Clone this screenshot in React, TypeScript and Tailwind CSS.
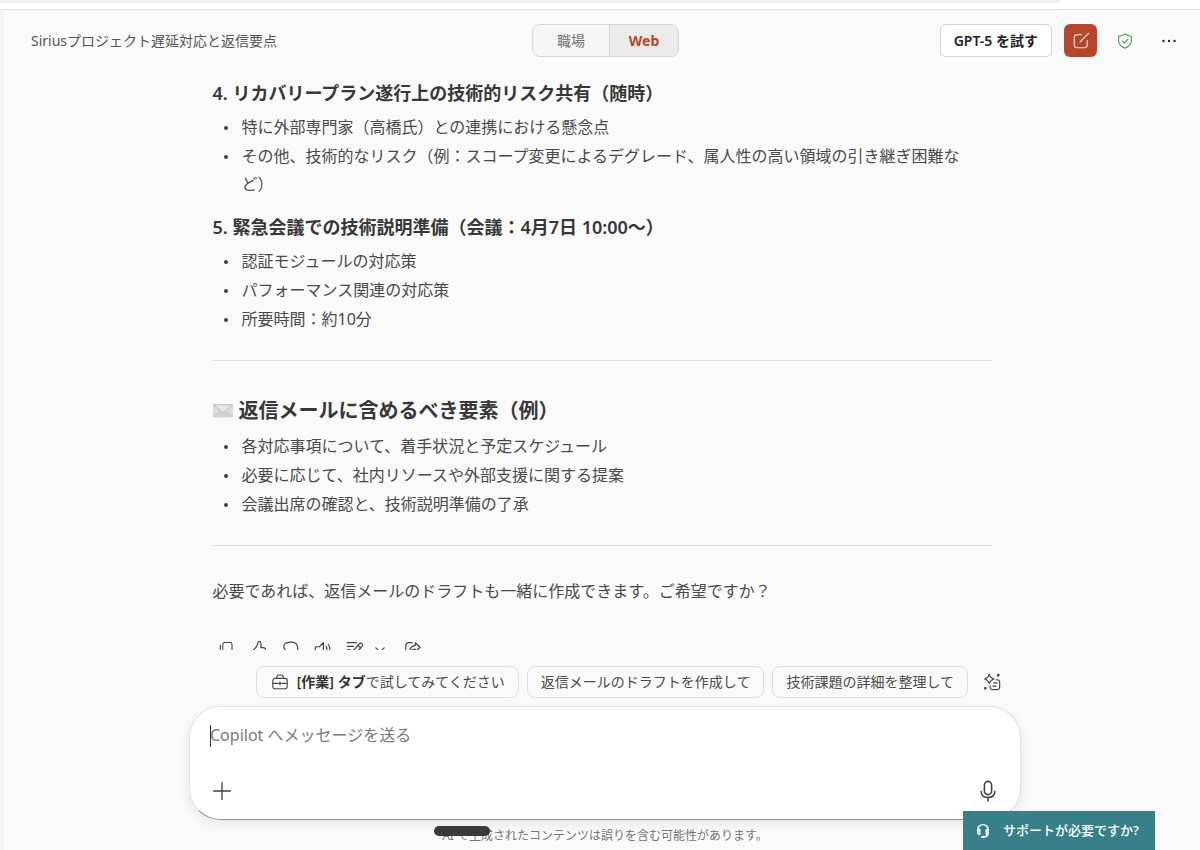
import { useState } from 'react';
import type { ReactNode } from 'react';

const sections = [
  {
    title: '4. リカバリープラン遂行上の技術的リスク共有（随時）',
    items: [
      '特に外部専門家（高橋氏）との連携における懸念点',
      'その他、技術的なリスク（例：スコープ変更によるデグレード、属人性の高い領域の引き継ぎ困難など）'
    ]
  },
  {
    title: '5. 緊急会議での技術説明準備（会議：4月7日 10:00～）',
    items: [
      '認証モジュールの対応策',
      'パフォーマンス関連の対応策',
      '所要時間：約10分'
    ]
  }
];

const replyItems = [
  '各対応事項について、着手状況と予定スケジュール',
  '必要に応じて、社内リソースや外部支援に関する提案',
  '会議出席の確認と、技術説明準備の了承'
];

function Icon({ children, className }: { children: ReactNode; className: string }) {
  return (
    <svg
      viewBox="0 0 20 20"
      fill="none"
      stroke="currentColor"
      strokeWidth="1.3"
      strokeLinecap="round"
      strokeLinejoin="round"
      className={className}
      aria-hidden="true"
    >
      {children}
    </svg>
  );
}

function BulletList({ items }: { items: string[] }) {
  return (
    <ul className="flex flex-col gap-px pr-4 pl-[11px]">
      {items.map((item) => (
        <li key={item} className="flex gap-[14px] text-base leading-7">
          <span className="mt-[13px] size-1 shrink-0 rounded-full bg-[#424242]" />
          <span>{item}</span>
        </li>
      ))}
    </ul>
  );
}

function Envelope() {
  return (
    <svg viewBox="0 0 20 14" className="h-[14px] w-5" aria-hidden="true">
      <rect x="0" y="0.5" width="20" height="13" rx="0.8" fill="#dcdcdc" />
      <path d="M0.5 13 L7.5 6.5 L10 8.5 L12.5 6.5 L19.5 13" fill="#d2d2d2" stroke="#bdbdbd" strokeWidth="0.6" />
      <path d="M0.5 0.8 L8.8 8 Q10 9 11.2 8 L19.5 0.8 Z" fill="#e6e6e6" stroke="#adadad" strokeWidth="0.7" />
    </svg>
  );
}

function MessageActions() {
  return (
    <div className="mt-[35px] flex items-center pl-[5px] text-[#424242]">
      <button type="button" aria-label="コピー">
        <Icon className="size-4">
          <rect x="6" y="2" width="11.5" height="13" rx="2" />
          <path d="M3 5v10a3 3 0 0 0 3 3h8" />
        </Icon>
      </button>
      <button type="button" aria-label="良い回答" className="ml-4">
        <Icon className="size-[18px]">
          <path d="M10 1.500c-.8 0-1 .8-1.300 2C8 6.500 7 8.500 5 10c-2 1.500-2 3-1 5 1 2 3 3 5.500 3h3c2.500 0 3.500-1 4-3l.800-3.500c.300-1.800-.800-3-2.500-3h-2.800c.300-2 .5-3.700.1-5C11.700 2 11 1.500 10 1.500Z" />
        </Icon>
      </button>
      <button type="button" aria-label="良くない回答" className="ml-[14px]">
        <Icon className="size-[18px]">
          <path d="M10 18c-1 0-1.200-.8-1.500-2C8 13.500 6 13 3.500 11 1.500 9 1.500 6 3.500 4 6 2.300 12 1.500 15 3.500c2 1.500 2.500 5 2.500 7 0 1.500-1 2-2.500 2h-3c.6 2 .3 5.500-2 5.500Z" />
        </Icon>
      </button>
      <button type="button" aria-label="読み上げる" className="ml-[14px]">
        <Icon className="size-[18px]">
          <path d="M10.500 3v14L6 13H2.500a1 1 0 0 1-1-1V8.500a1 1 0 0 1 1-1H6L10.500 3Z" />
          <path d="M13.500 7c1 2 1 4 0 6M16 5c2 3.200 2 6.800 0 10" />
        </Icon>
      </button>
      <button type="button" aria-label="編集" className="ml-[14px]">
        <Icon className="size-[18px]">
          <path d="M1.500 3h10M1.500 7h7M1.500 11H5" />
          <path d="m6 17 1-4 8-9c1.700-1.700 4.500 .8 3 2.800l-8 9L6 17ZM13 5.500 16.500 9" />
        </Icon>
      </button>
      <button type="button" aria-label="編集オプション" className="ml-[10px]">
        <Icon className="size-3">
          <path d="m3 8 7 7 7-7" strokeWidth="1.800" />
        </Icon>
      </button>
      <button type="button" aria-label="共有" className="ml-[18px]">
        <Icon className="size-[18px]">
          <path d="M9 3H5a3 3 0 0 0-3 3v8a3 3 0 0 0 3 3h8a3 3 0 0 0 3-3v-1" />
          <path d="M12.500 3 18 8l-5.500 5v-3C9.500 10 8 11 6 13c.5-4 3-6.500 6.500-7V3Z" />
        </Icon>
      </button>
    </div>
  );
}

function Header() {
  const [mode, setMode] = useState('web');

  return (
    <header className="grid h-[61px] shrink-0 grid-cols-[1fr_auto_1fr] items-center pr-5 pl-[27px] text-sm">
      <h1 className="truncate text-[#555555]">Siriusプロジェクト遅延対応と返信要点</h1>

      <div className="flex h-[33px] overflow-hidden rounded-lg border border-[#d4d4d4]">
        <button
          type="button"
          onClick={() => setMode('work')}
          className={`w-[76px] ${mode === 'work' ? 'bg-[#ebebeb] font-bold text-[#b7472a]' : 'bg-[#f6f6f6] text-[#707070]'}`}
        >
          職場
        </button>
        <button
          type="button"
          onClick={() => setMode('web')}
          className={`w-[69px] border-l border-[#d4d4d4] ${mode === 'web' ? 'bg-[#ebebeb] font-bold text-[#b7472a]' : 'bg-[#f6f6f6] text-[#707070]'}`}
        >
          Web
        </button>
      </div>

      <div className="flex items-center justify-end">
        <button
          type="button"
          className="h-[33px] rounded-md border border-[#d4d4d4] bg-white px-[13px] font-semibold whitespace-nowrap text-[#242424]"
        >
          GPT-5 を試す
        </button>
        <button
          type="button"
          aria-label="新しいチャット"
          className="ml-3 flex size-[33px] items-center justify-center rounded-md bg-[#b7472a] text-[#ffe3da]"
        >
          <Icon className="size-[18px]">
            <path d="M10.500 3H6A3.500 3.500 0 0 0 2.500 6.500v7.500A3.500 3.500 0 0 0 6 17.500h7.500A3.500 3.500 0 0 0 17 14V9.500" />
            <path d="M9 11 18.500 1.500" />
          </Icon>
        </button>
        <button type="button" aria-label="保護されています" className="ml-5 text-[#4b9447]">
          <Icon className="size-4">
            <path d="M10 1.200c2.200 1.800 4.800 2.700 8 2.900v5.400c0 4.600-2.700 7.600-8 9.500-5.300-1.900-8-4.900-8-9.500V4.100c3.200-.2 5.800-1.100 8-2.900Z" />
            <path d="m6.500 10.300 2.400 2.400 4.800-4.800" />
          </Icon>
        </button>
        <button type="button" aria-label="その他" className="ml-[25px] text-[#242424]">
          <svg viewBox="0 0 22 22" fill="currentColor" className="size-[22px]" aria-hidden="true">
            <circle cx="5.500" cy="11" r="1.200" />
            <circle cx="11" cy="11" r="1.200" />
            <circle cx="16.500" cy="11" r="1.200" />
          </svg>
        </button>
      </div>
    </header>
  );
}

function Suggestions() {
  const chip = 'flex h-8 items-center rounded-lg border border-[#e0e0e0] bg-[#fafafa] px-[13px] whitespace-nowrap';

  return (
    <div className="flex items-center justify-end gap-2 pr-5 text-sm text-[#4a4a4a]">
      <button type="button" className={chip}>
        <Icon className="mr-2 ml-px size-[18px]">
          <path d="M4.500 6h11A2.500 2.500 0 0 1 18 8.500V15a2.500 2.500 0 0 1-2.500 2.500h-11A2.500 2.500 0 0 1 2 15V8.500A2.500 2.500 0 0 1 4.500 6Z" />
          <path d="M6.500 6V4A1.800 1.800 0 0 1 8.300 2.200h3.400A1.800 1.800 0 0 1 13.500 4v2M2 11.500h16M10 10v3" />
        </Icon>
        <span>
          <b className="font-semibold text-[#333333]">[作業] タブ</b>で試してみてください
        </span>
      </button>
      <button type="button" className={chip}>返信メールのドラフトを作成して</button>
      <button type="button" className={chip}>技術課題の詳細を整理して</button>
      <button type="button" aria-label="その他のプロンプト" className="ml-[7px]">
        <Icon className="size-[18px]">
          <path d="M7 1.500c.7 2.600 2.300 4.300 5.200 5.200C9.300 7.600 7.700 9.300 7 11.900 6.300 9.300 4.700 7.600 1.800 6.700 4.700 5.800 6.300 4.100 7 1.500Z" />
          <path d="M14.500 7.500h1.200A2.800 2.800 0 0 1 18.500 10.300v5.400a2.800 2.800 0 0 1-2.800 2.800h-4.900A2.800 2.800 0 0 1 8 15.700v-1.500M12 11h3.500M11 14.500h3.500" />
          <circle cx="17" cy="2.500" r="0.900" fill="currentColor" />
          <circle cx="2.500" cy="17" r="0.900" fill="currentColor" />
        </Icon>
      </button>
    </div>
  );
}

function Composer() {
  const [message, setMessage] = useState('');

  return (
    <div className="relative mt-2 flex h-[114px] flex-col justify-between rounded-[32px] border border-[#e4e4e4] border-b-[#909090] bg-white px-5 pt-4 pb-4 shadow-[0_4px_12px_rgba(0,0,0,0.08)]">
      <textarea
        rows={1}
        aria-label="Copilot へメッセージを送る"
        placeholder="Copilot へメッセージを送る"
        value={message}
        onChange={(e) => setMessage(e.target.value)}
        className="h-6 w-full resize-none text-base leading-6 text-[#242424] outline-none placeholder:text-[#7a7a7a]"
      />
      {!message && <span className="absolute top-[18px] left-5 h-[22px] w-px bg-[#333333]" />}
      <div className="flex items-center justify-between text-[#424242]">
        <button type="button" aria-label="追加">
          <Icon className="size-6">
            <path d="M10 3v14M3 10h14" strokeWidth="1.100" />
          </Icon>
        </button>
        <button type="button" aria-label="音声入力">
          <Icon className="size-6">
            <rect x="7" y="2" width="6" height="11" rx="3" />
            <path d="M4.300 10.500C4.300 13.500 6.500 15.500 10 15.500s5.700-2 5.700-5M10 15.500v2.800" />
          </Icon>
        </button>
      </div>
    </div>
  );
}

export default function App() {
  return (
    <div
      lang="ja"
      className="relative flex h-screen flex-col overflow-hidden bg-white font-['Noto_Sans','Noto_Sans_CJK_JP',sans-serif] text-[#4a4a4a]"
    >
      <div className="h-[9px] shrink-0">
        <div className="mr-[140px] h-[3px] rounded-br-lg bg-[#eaf2f9]" />
      </div>

      <div className="flex min-h-0 flex-1 flex-col border-t border-l-4 border-t-[#dedede] border-l-[#f4f4f4] bg-[#fafafa]">
        <Header />

        <main className="min-h-0 flex-1 overflow-hidden">
          <article className="mx-auto max-w-[779px] pt-2">
            {sections.map((section) => (
              <section key={section.title} className="mb-[15px]">
                <h3 className="mb-[6px] text-lg leading-7 font-semibold text-[#383838]">{section.title}</h3>
                <BulletList items={section.items} />
              </section>
            ))}

            <hr className="mt-[27px] border-[#e0e0e0]" />

            <section className="mt-[34px]">
              <h2 className="mb-[5px] flex items-center gap-[6px] text-xl leading-8 font-semibold text-[#383838]">
                <Envelope />
                返信メールに含めるべき要素（例）
              </h2>
              <BulletList items={replyItems} />
            </section>

            <hr className="mt-[27px] border-[#e0e0e0]" />

            <p className="mt-[31px] text-base leading-7">
              必要であれば、返信メールのドラフトも一緒に作成できます。ご希望ですか？
            </p>
            <MessageActions />
          </article>
        </main>

        <footer className="shrink-0 pt-4 pl-[6px]">
          <div className="mx-auto max-w-[832px]">
            <Suggestions />
            <Composer />
            <div className="flex justify-center pt-[6px] pb-1 text-xs leading-5 text-[#757575]">
              <p className="relative">
                <span className="absolute top-0 -left-2 h-[10px] w-14 rounded-full bg-[#303030]/95" />
                AI で生成されたコンテンツは誤りを含む可能性があります。
              </p>
            </div>
          </div>
        </footer>
      </div>

      <button
        type="button"
        className="absolute right-[45px] bottom-0 flex h-[39px] w-48 items-center gap-3 bg-[#378089] pl-3 text-[13px] font-medium whitespace-nowrap text-white"
      >
        <Icon className="size-4">
          <path d="M3.500 11V8.500a6.500 6.500 0 0 1 13 0V12a5.500 5.500 0 0 1-4.500 5.500H10" strokeWidth="1.800" />
          <path d="M3.500 8.500H6v5.500H5A1.500 1.500 0 0 1 3.500 12.500ZM16.500 8.500H14v5.500h1a1.500 1.500 0 0 0 1.500-1.500Z" strokeWidth="1.800" />
          <circle cx="9.500" cy="17.500" r="1" fill="currentColor" />
        </Icon>
        サポートが必要ですか?
      </button>
    </div>
  );
}
